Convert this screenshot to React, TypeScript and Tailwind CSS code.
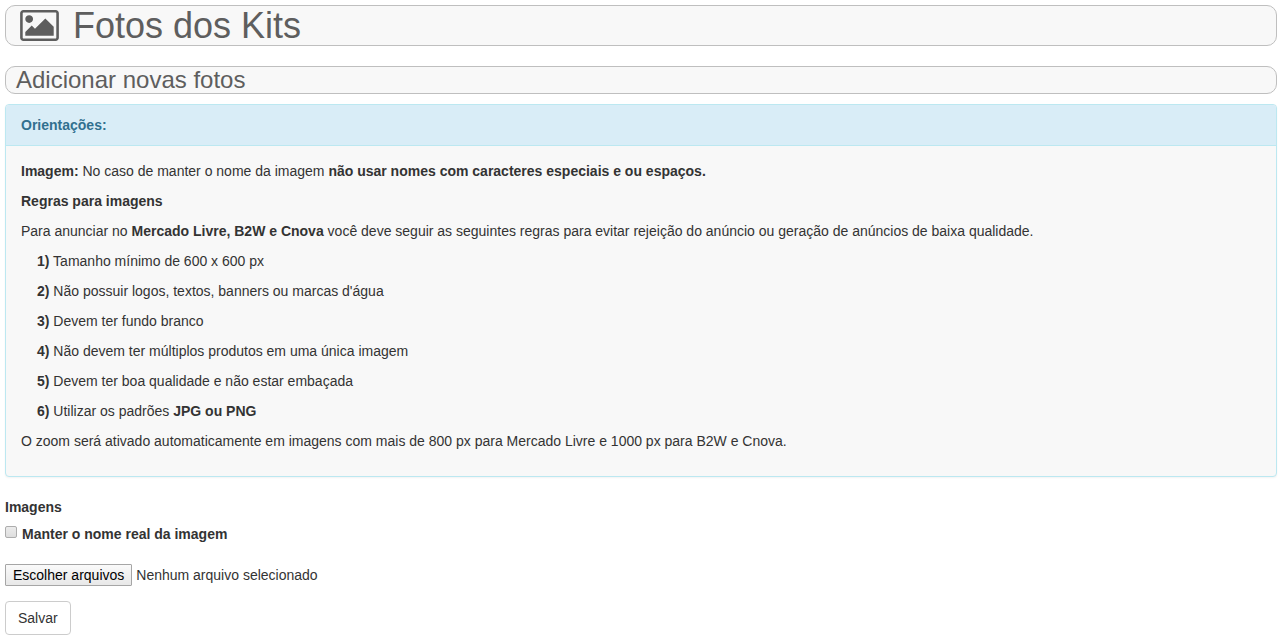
import { useRef, useState } from 'react';

const rules = [
    { id: 1, text: 'Tamanho mínimo de 600 x 600 px' },
    { id: 2, text: "Não possuir logos, textos, banners ou marcas d'água" },
    { id: 3, text: 'Devem ter fundo branco' },
    { id: 4, text: 'Não devem ter múltiplos produtos em uma única imagem' },
    { id: 5, text: 'Devem ter boa qualidade e não estar embaçada' },
    { id: 6, text: 'Utilizar os padrões ', strong: 'JPG ou PNG' },
];

function PictureIcon() {
    return (
        <svg
            className="w-[39px] h-[31px] shrink-0"
            viewBox="0 128 1920 1536"
            fill="currentColor"
            aria-hidden="true"
        >
            <path d="M640 576q0 80-56 136t-136 56-136-56-56-136 56-136 136-56 136 56 56 136zM1664 960v448h-1408v-192l320-320 160 160 512-512zM1760 256h-1600q-13 0-22.500 9.500t-9.500 22.500v1216q0 13 9.500 22.500t22.500 9.500h1600q13 0 22.500-9.500t9.500-22.500v-1216q0-13-9.500-22.500t-22.500-9.500zM1920 288v1216q0 66-47 113t-113 47h-1600q-66 0-113-47t-47-113v-1216q0-66 47-113t113-47h1600q66 0 113 47t47 113z" />
        </svg>
    );
}

function Guidelines() {
    return (
        <section className="mt-[10px] rounded border border-[#bce8f1] bg-[#f8f8f8] shadow-xs">
            <h3 className="rounded-t-[3px] border-b border-[#bce8f1] bg-[#d9edf7] px-[15px] py-[10px] font-bold text-[#31708f]">
                Orientações:
            </h3>
            <div className="flex flex-col gap-[10px] px-[15px] pt-[15px] pb-[25px]">
                <p>
                    <strong>Imagem:</strong> No caso de manter o nome da imagem{' '}
                    <strong>não usar nomes com caracteres especiais e ou espaços.</strong>
                </p>
                <p>
                    <strong>Regras para imagens</strong>
                </p>
                <p>
                    Para anunciar no <strong>Mercado Livre, B2W e Cnova</strong> você deve seguir as
                    seguintes regras para evitar rejeição do anúncio ou geração de anúncios de baixa
                    qualidade.
                </p>
                <ul className="flex flex-col gap-[10px] pl-4">
                    {rules.map((rule) => (
                        <li key={rule.id}>
                            <strong>{rule.id})</strong> {rule.text}
                            {rule.strong && <strong>{rule.strong}</strong>}
                        </li>
                    ))}
                </ul>
                <p>
                    O zoom será ativado automaticamente em imagens com mais de 800 px para Mercado
                    Livre e 1000 px para B2W e Cnova.
                </p>
            </div>
        </section>
    );
}

function UploadForm() {
    const fileInput = useRef<HTMLInputElement>(null);
    const [fileNames, setFileNames] = useState<string[]>([]);

    return (
        <form className="mt-5" onSubmit={(e) => e.preventDefault()}>
            <label htmlFor="images" className="block font-bold">
                Imagens
            </label>
            <div className="mt-[7px] flex items-start gap-[5px]">
                <input
                    id="keep-name"
                    type="checkbox"
                    className="mt-[2px] size-3 shrink-0 appearance-none rounded-xs border border-[#adadad] bg-linear-to-b from-[#ececec] to-[#dedede] checked:bg-[#337ab7] checked:bg-none"
                />
                <label htmlFor="keep-name" className="font-bold">
                    Manter o nome real da imagem
                </label>
            </div>
            <div className="mt-5 flex items-center gap-1">
                <input
                    ref={fileInput}
                    id="images"
                    type="file"
                    multiple
                    accept="image/png,image/jpeg"
                    className="hidden"
                    onChange={(e) =>
                        setFileNames(Array.from(e.target.files ?? []).map((f) => f.name))
                    }
                />
                <button
                    type="button"
                    className="h-[22px] rounded-[1px] border border-[#a6a6a6] bg-linear-to-b from-[#fafafa] to-[#e8e8e8] px-[7px] text-black"
                    onClick={() => fileInput.current?.click()}
                >
                    Escolher arquivos
                </button>
                <span>{fileNames.length ? fileNames.join(', ') : 'Nenhum arquivo selecionado'}</span>
            </div>
            <button
                type="submit"
                className="mt-[15px] rounded border border-[#cccccc] bg-white px-3 py-[6px] hover:bg-[#e6e6e6]"
            >
                Salvar
            </button>
        </form>
    );
}

export default function App() {
    return (
        <main className="pt-[5px] pr-[6px] pl-[5px] font-['Liberation_Sans',Arial,sans-serif] text-[14px] leading-[20px] text-[#333333]">
            <h1 className="flex items-center gap-[14px] rounded-[10px] border border-[#bfbfbf] bg-[#f8f8f8] pl-[14px] text-[36px] leading-[39px] text-[#5e5e5e]">
                <PictureIcon />
                Fotos dos Kits
            </h1>
            <h2 className="mt-5 rounded-[10px] border border-[#bfbfbf] bg-[#f8f8f8] pl-[10px] text-[24px] leading-[26px] text-[#5e5e5e]">
                Adicionar novas fotos
            </h2>
            <Guidelines />
            <UploadForm />
        </main>
    );
}
